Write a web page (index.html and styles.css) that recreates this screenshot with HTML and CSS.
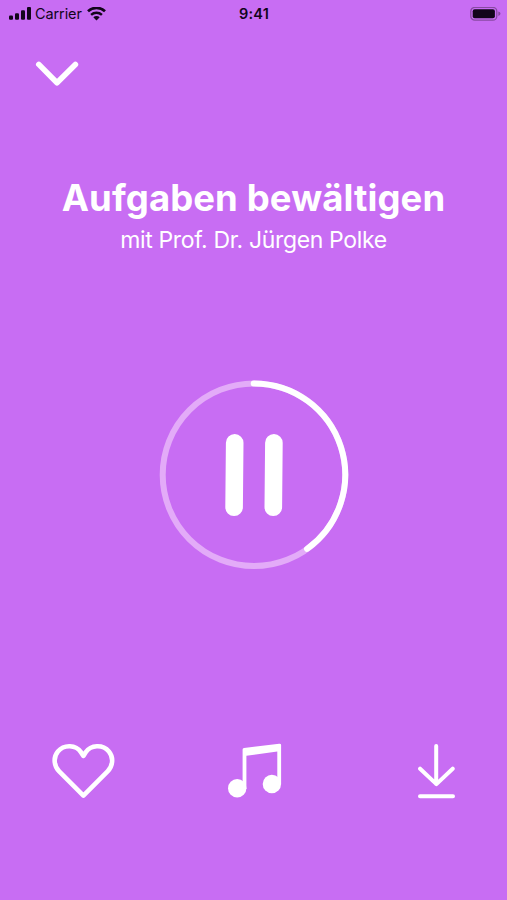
FILE: index.html
```
<!DOCTYPE html>
<html lang="de">
<head>
<meta charset="utf-8">
<title>Aufgaben bewältigen</title>
<link rel="stylesheet" href="styles.css">
</head>
<body>
<main class="player">
  <header class="status">
    <div class="network">
      <svg width="23" height="14" viewBox="0 0 23 14"><rect x="0" y="8.4" width="4" height="4.4" rx="1.1"/><rect x="6" y="6.2" width="4" height="6.6" rx="1.1"/><rect x="12" y="3.2" width="4" height="9.6" rx="1.1"/><rect x="18" y="0" width="4" height="12.8" rx="1.1"/></svg>
      <span class="carrier">Carrier</span>
      <svg class="wifi" width="19" height="14" viewBox="0 0 19 14"><path d="M1 4.2C5.8-.2 13.2-.2 18 4.2" fill="none" stroke="#12051a" stroke-width="2.7"/><path d="M4.1 7.9C7.1 5.1 11.9 5.1 14.9 7.9" fill="none" stroke="#12051a" stroke-width="2.4"/><path d="M6.3 10.2C8.2 8.5 10.8 8.5 12.7 10.2L9.5 13.4Z"/></svg>
    </div>
    <time class="clock">9:41</time>
    <svg class="battery" width="31" height="15" viewBox="0 0 31 15"><rect x=".8" y=".4" width="26" height="12.8" rx="4" fill="none" stroke="#884aa2" stroke-width="1.3"/><rect x="2.7" y="2.3" width="22.2" height="9" rx="2"/><path d="M28.3 4.6q2.2.6 2.2 2.2t-2.2 2.2z" fill="#884aa2"/></svg>
  </header>
  <button class="icon close" aria-label="Schließen"><svg width="44" height="28" viewBox="0 0 44 28"><path d="M3.8 4.4 22 22.8 40.4 4.4" fill="none" stroke="#fff" stroke-width="5.6" stroke-linecap="round" stroke-linejoin="round"/></svg></button>
  <section class="heading">
    <h1>Aufgaben bewältigen</h1>
    <p>mit Prof. Dr. Jürgen Polke</p>
  </section>
  <button class="icon pause" aria-label="Pause"><svg width="190" height="190" viewBox="0 0 190 190"><g fill="none" stroke-width="6"><circle cx="95" cy="94.7" r="91.3" stroke="#e3abf8"/><path d="M94.7 3.4A91.3 91.3 0 0 1 148.1 168.9" stroke="#fff" stroke-linecap="round"/></g><path d="M75.7 62.8 75.1 127.3M114.9 62.8 114.3 127.3" stroke="#fff" stroke-width="17.6" stroke-linecap="round"/></svg></button>
  <nav class="actions">
    <button class="icon" aria-label="Favorit"><svg width="64" height="58" viewBox="0 0 64 58"><path d="M32.4 52.6 8.2 28.4C2.7 22.8 2.1 14.1 6.9 8.4C13.2 1 25 1.8 29.9 9.1L32.4 12.9 34.9 9.1C39.8 1.8 51.6 1 57.9 8.4C62.7 14.1 62.1 22.8 56.6 28.4Z" fill="none" stroke="#fff" stroke-width="4.6" stroke-linejoin="round"/></svg></button>
    <button class="icon" aria-label="Musik"><svg width="54" height="58" viewBox="0 0 54 58"><path d="M14.6 6.6Q14.6 5.2 16 5L51.1.7Q53.1.5 53.1 2V41.2H49.3V8.6L18.4 12.8V46H14.6Z" fill="#fff"/><circle cx="9.2" cy="45.3" r="9.2" fill="#fff"/><circle cx="43.9" cy="41" r="9.2" fill="#fff"/></svg></button>
    <button class="icon" aria-label="Herunterladen"><svg width="40" height="58" viewBox="0 0 40 58"><path d="M20.2 3V41M4.1 25.7 20.4 41.1 36.7 25.7M4 53.3H37" fill="none" stroke="#fff" stroke-width="4" stroke-linecap="round" stroke-linejoin="round"/></svg></button>
  </nav>
</main>
</body>
</html>
```
FILE: styles.css
```
* { box-sizing: border-box; }
body { margin: 0; background: #c86df3; }
.player { height: 900px; display: flex; flex-direction: column; color: #fff; font-family: Inter, sans-serif; overflow: hidden; }
svg { display: block; }
.icon { display: block; padding: 0; border: 0; background: none; }
.status { display: grid; grid-template-columns: 1fr auto 1fr; align-items: center; height: 28px; padding: 0 6px 0 9px; color: #12051a; fill: #12051a; }
.network { display: flex; align-items: center; }
.carrier { margin-left: 3px; font-size: 14.5px; line-height: 20px; letter-spacing: -0.1px; }
.wifi { margin-left: 5px; }
.clock { margin-right: 2px; font-size: 14.5px; font-weight: 600; line-height: 20px; letter-spacing: 0.2px; }
.battery { justify-self: end; }
.close { margin: 32px 0 0 35px; align-self: flex-start; }
.heading { margin-top: 88px; text-align: center; white-space: nowrap; }
h1 { margin: 0; font-size: 36.5px; font-weight: 650; line-height: 44px; letter-spacing: 0.1px; }
p { margin: 4px 0 0; font-size: 23px; font-weight: 400; line-height: 32px; letter-spacing: -0.35px; }
.pause { margin: 124px 0 0 159px; align-self: flex-start; }
.actions { display: grid; grid-template-columns: 1fr auto 1fr; align-items: start; margin-top: 173px; padding: 0 51px; }
.actions .icon:nth-child(2) { margin-left: 2px; }
.actions .icon:last-child { justify-self: end; }
```
